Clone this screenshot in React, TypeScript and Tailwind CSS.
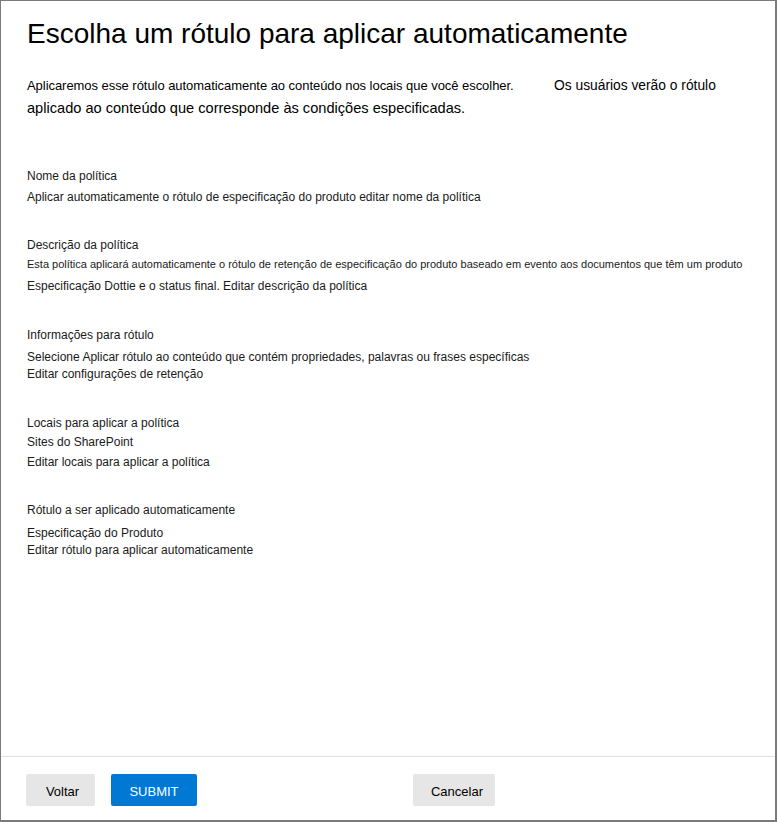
import React from "react";

const Row = ({ children, mt, size = "text-[12px]" }: { children: React.ReactNode; mt: string; size?: string }) => (
  <div className={`${mt} h-[16px] leading-[16px] ${size} text-[#1a1a1a] whitespace-nowrap`}>{children}</div>
);

export default function App() {
  return (
    <div className="w-[777px] h-[822px] bg-white border-l border-t border-r-2 border-b-2 border-[#7a7a7a] flex flex-col" style={{ fontFamily: '"Liberation Sans", Arial, sans-serif' }}>
      <div className="flex-1 pl-[26px]">
        <div className="mt-[15px] h-[36px] leading-[36px] text-[28px] text-black whitespace-nowrap">
          Escolha um rótulo para aplicar automaticamente
        </div>
        <div className="mt-[23px] h-[22px] leading-[22px] text-[13px] text-black flex whitespace-nowrap">
          <span className="w-[527px] tracking-[-0.05px]">Aplicaremos esse rótulo automaticamente ao conteúdo nos locais que você escolher.</span>
          <span className="text-[13.8px]">Os usuários verão o rótulo</span>
        </div>
        <div className="h-[22px] leading-[22px] text-[14.6px] text-black whitespace-nowrap">
          aplicado ao conteúdo que corresponde às condições especificadas.
        </div>
        <Row mt="mt-[49px]">Nome da política</Row>
        <Row mt="mt-[5px]">Aplicar automaticamente o rótulo de especificação do produto editar nome da política</Row>
        <Row mt="mt-[32px]">Descrição da política</Row>
        <Row mt="mt-[3px]" size="text-[11px]">Esta política aplicará automaticamente o rótulo de retenção de especificação do produto baseado em evento aos documentos que têm um produto</Row>
        <Row mt="mt-[6px]">Especificação Dottie e o status final. Editar descrição da política</Row>
        <Row mt="mt-[33px]">Informações para rótulo</Row>
        <Row mt="mt-[6px]">Selecione Aplicar rótulo ao conteúdo que contém propriedades, palavras ou frases específicas</Row>
        <Row mt="mt-[1px]">Editar configurações de retenção</Row>
        <Row mt="mt-[33px]">Locais para aplicar a política</Row>
        <Row mt="mt-[3px]">Sites do SharePoint</Row>
        <Row mt="mt-[4px]">Editar locais para aplicar a política</Row>
        <Row mt="mt-[32px]">Rótulo a ser aplicado automaticamente</Row>
        <Row mt="mt-[7px]">Especificação do Produto</Row>
        <Row mt="mt-[1px]">Editar rótulo para aplicar automaticamente</Row>
      </div>
      <div className="h-[64px] border-t border-[#e1e1e1] pt-[17px] pl-[25px] flex items-start">
        <button className="w-[69px] h-[32px] bg-[#e6e6e6] rounded-[2px] pt-[3px] pl-[4px] text-[13px] text-black">Voltar</button>
        <button className="ml-[16px] w-[86px] h-[32px] bg-[#0078d4] rounded-[2px] pt-[3px] text-[13px] text-white">SUBMIT</button>
        <button className="ml-[216px] w-[82px] h-[32px] bg-[#e6e6e6] rounded-[2px] pt-[3px] pl-[6px] text-[13px] text-black">Cancelar</button>
      </div>
    </div>
  );
}
